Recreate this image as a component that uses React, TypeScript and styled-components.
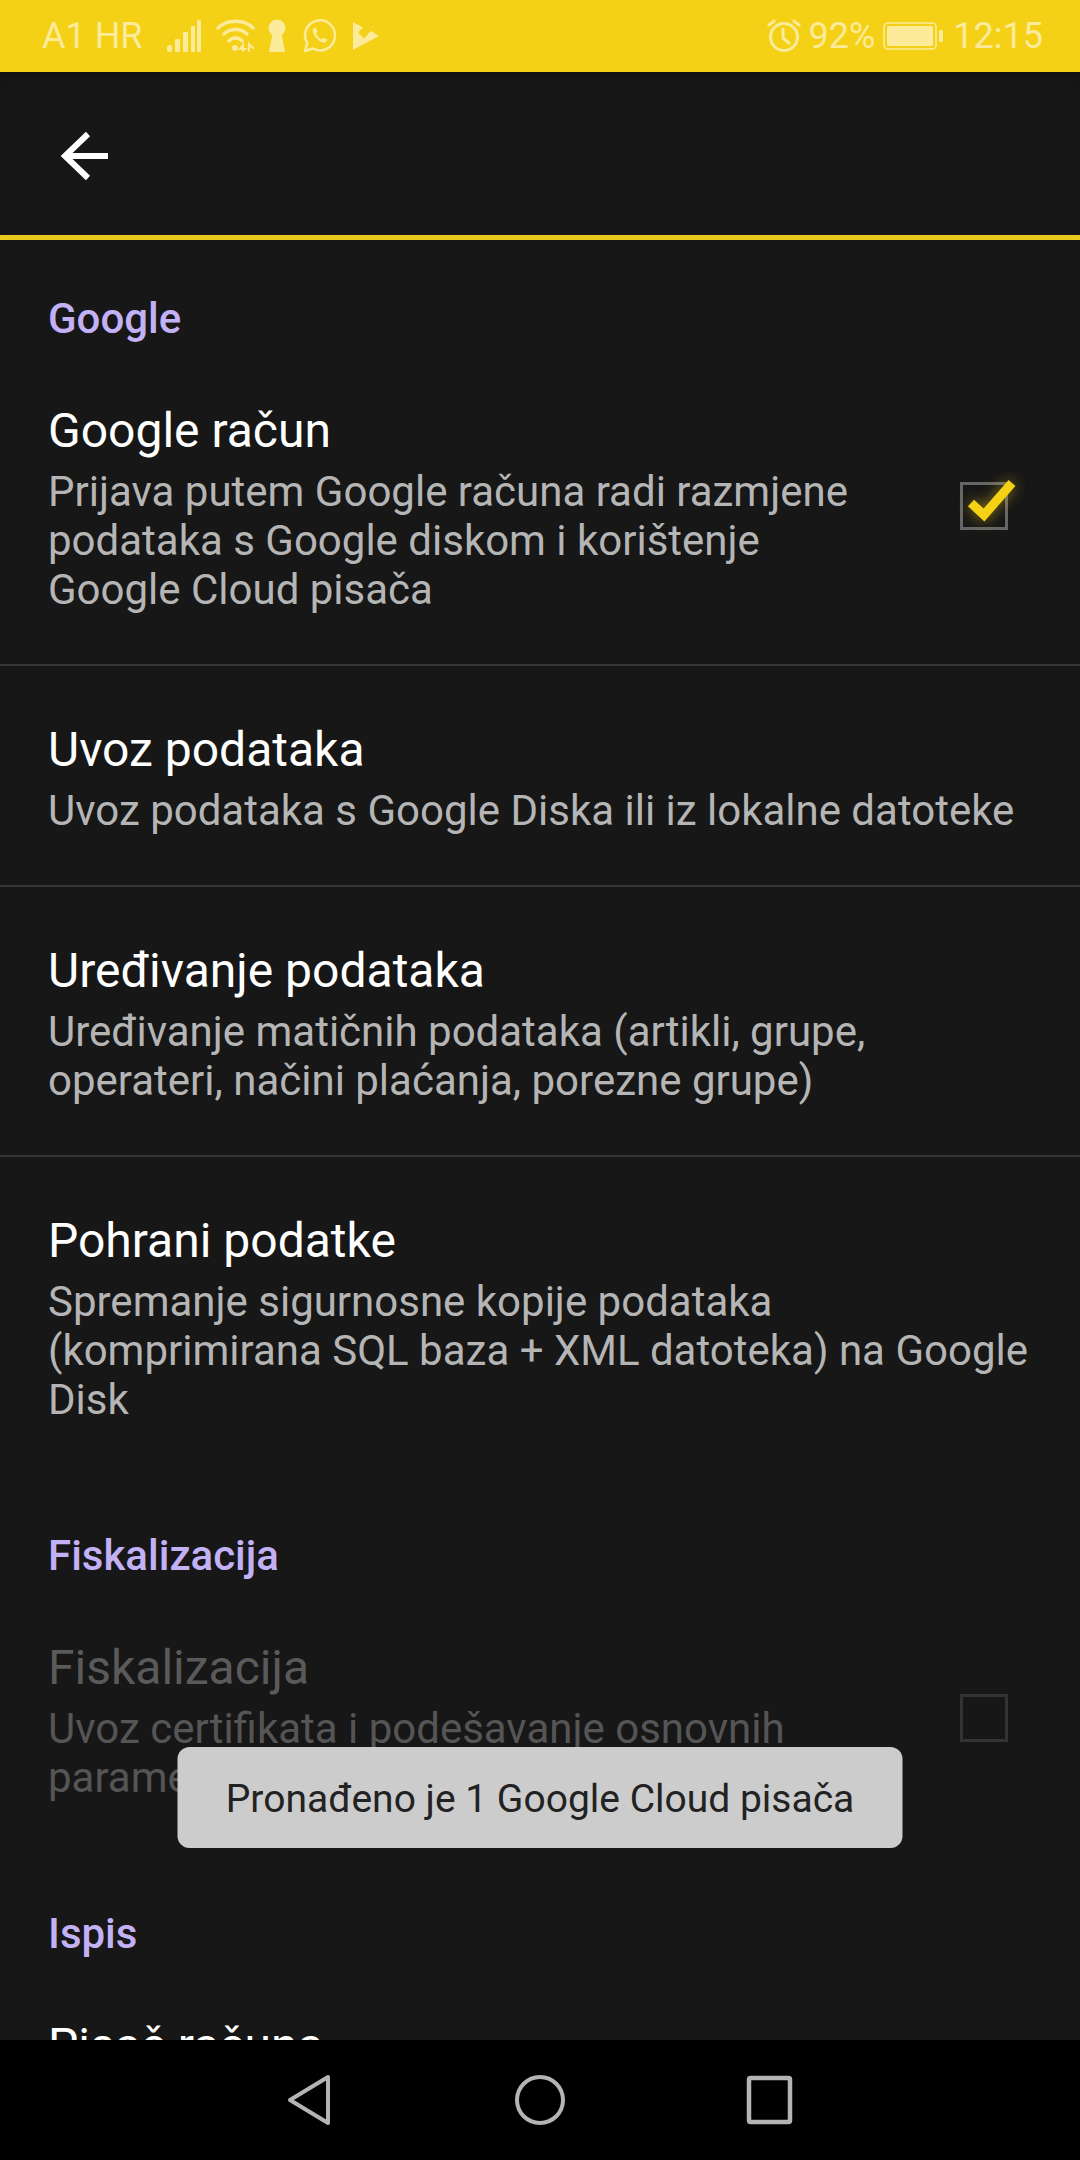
import React from 'react';
import styled, {createGlobalStyle} from 'styled-components';

const GlobalStyle = createGlobalStyle`
    html, body {
        margin: 0;
        padding: 0;
        background: #171717;
    }
    * {
        box-sizing: border-box;
    }
`

const pale = '#fbeb9a'

const SignalIcon = () => (
    <svg width="36" height="34" viewBox="0 0 36 34">
        <rect x="1" y="26" width="5" height="7" rx="2.5" fill={pale}/>
        <rect x="9" y="20" width="5" height="13" rx="1" fill={pale}/>
        <rect x="17" y="13" width="5" height="20" rx="1" fill={pale}/>
        <rect x="25" y="7" width="4" height="26" rx="1" fill={pale}/>
        <rect x="31" y="1" width="4" height="32" rx="1" fill={pale}/>
    </svg>
)

const WifiIcon = () => (
    <WifiSvg width="40" height="34" viewBox="0 0 40 34" fill="none" stroke={pale} strokeWidth="3.4" strokeLinecap="round">
        <path d="M2 9C11 0 28 0 37 9"/>
        <path d="M8 15C14 9 25 9 31 15"/>
        <path d="M13 22C16 18 23 18 26 22"/>
        <circle cx="19" cy="29" r="3" fill={pale} stroke="none"/>
        <path d="M27 32V26L24 30H30M33 32V25L37 29" strokeWidth="2"/>
    </WifiSvg>
)

const KeyholeIcon = () => (
    <svg width="18" height="34" viewBox="0 0 18 34">
        <circle cx="9" cy="9" r="8.5" fill={pale}/>
        <path d="M5 12H13L17 33H1Z" fill={pale}/>
    </svg>
)

const WhatsappIcon = () => (
    <svg width="33" height="34" viewBox="0 0 33 34" fill="none" stroke={pale}>
        <path d="M2 32L4.4 24.4A15 15 0 1 1 10 29.6Z" strokeWidth="2.6" strokeLinejoin="round"/>
        <path d="M10.5 9.5C9 11 9.5 14 12.5 18C15.5 22 19.5 24.5 22 23.5C24 22.7 24.5 21 24 20.5L20.5 18.7L18.8 20.5C16.5 19.5 14 17 13 14.5L14.5 12.8L13 9C12.5 8.5 11.2 8.8 10.5 9.5Z" fill={pale} stroke="none"/>
    </svg>
)

const PlayCheckIcon = () => (
    <svg width="26" height="28" viewBox="0 0 26 28">
        <path d="M0 0L10 5.5L6 9L11 14L20 4L18 9L26 14L0 28Z" fill={pale}/>
        <path d="M6 10L11 15L19 6" fill="none" stroke="#f4d116" strokeWidth="2"/>
    </svg>
)

const AlarmIcon = () => (
    <svg width="34" height="34" viewBox="0 0 34 34" fill="none" stroke={pale} strokeWidth="3" strokeLinecap="round">
        <circle cx="17" cy="18" r="13.5"/>
        <path d="M16 10V19L22 24"/>
        <path d="M2 6L7 2M32 6L27 2"/>
    </svg>
)

const BatteryIcon = () => (
    <svg width="62" height="28" viewBox="0 0 62 28">
        <rect x="1" y="1" width="52" height="26" rx="4" fill="none" stroke={pale} strokeWidth="1.6"/>
        <rect x="4" y="4" width="46" height="20" rx="2" fill={pale}/>
        <rect x="56" y="8" width="4" height="12" rx="1.5" fill={pale}/>
    </svg>
)

export default function App() {
    return (
        <Screen>
            <GlobalStyle/>
            <StatusBar>
                <StatusGroup>
                    <StatusText>A1 HR</StatusText>
                    <SignalSlot><SignalIcon/></SignalSlot>
                    <WifiIcon/>
                    <KeyholeIcon/>
                    <WhatsappIcon/>
                    <PlayCheckIcon/>
                </StatusGroup>
                <StatusRight>
                    <AlarmIcon/>
                    <StatusText>92%</StatusText>
                    <BatteryIcon/>
                    <StatusText>12:15</StatusText>
                </StatusRight>
            </StatusBar>

            <Toolbar>
                <svg width="48" height="52" viewBox="0 0 48 52" fill="none" stroke="#fff" strokeWidth="6">
                    <path d="M48 26H5"/>
                    <path d="M28 4L5 26L28 48"/>
                </svg>
            </Toolbar>

            <Content>
                <Category>Google</Category>
                <Row $divider>
                    <RowText>
                        <Title>Google račun</Title>
                        <Summary>Prijava putem Google računa radi razmjene podataka s Google diskom i korištenje Google Cloud pisača</Summary>
                    </RowText>
                    <CheckBox>
                        <CheckMark viewBox="0 0 60 60" fill="none">
                            <path d="M11 33L24 45L52 13" stroke="#f5d215" strokeWidth="9"/>
                        </CheckMark>
                    </CheckBox>
                </Row>
                <Row $divider>
                    <RowText>
                        <Title>Uvoz podataka</Title>
                        <Summary>Uvoz podataka s Google Diska ili iz lokalne datoteke</Summary>
                    </RowText>
                </Row>
                <Row $divider>
                    <RowText>
                        <Title>Uređivanje podataka</Title>
                        <Summary>Uređivanje matičnih podataka (artikli, grupe, operateri, načini plaćanja, porezne grupe)</Summary>
                    </RowText>
                </Row>
                <Row>
                    <RowText>
                        <Title>Pohrani podatke</Title>
                        <Summary>Spremanje sigurnosne kopije podataka (komprimirana SQL baza + XML datoteka) na Google Disk</Summary>
                    </RowText>
                </Row>

                <Category>Fiskalizacija</Category>
                <Row>
                    <RowText>
                        <Title $disabled>Fiskalizacija</Title>
                        <Summary $disabled>Uvoz certifikata i podešavanje osnovnih parametara za provedbu fiskalizacije</Summary>
                    </RowText>
                    <CheckBox $disabled/>
                </Row>

                <Category>Ispis</Category>
                <Row>
                    <RowText>
                        <Title>Pisač računa</Title>
                    </RowText>
                </Row>
            </Content>

            <Toast>Pronađeno je 1 Google Cloud pisača</Toast>

            <NavBar>
                <svg width="48" height="52" viewBox="0 0 48 52" fill="none" stroke="#b4b4b4" strokeWidth="4" strokeLinejoin="round">
                    <path d="M42 3V49L4 26Z"/>
                </svg>
                <svg width="52" height="52" viewBox="0 0 52 52" fill="none" stroke="#b4b4b4" strokeWidth="4">
                    <circle cx="26" cy="26" r="23"/>
                </svg>
                <svg width="48" height="52" viewBox="0 0 48 52" fill="none" stroke="#b4b4b4" strokeWidth="4.5" strokeLinejoin="round">
                    <rect x="3" y="4" width="41" height="44" rx="1.5"/>
                </svg>
            </NavBar>
        </Screen>
    );
}

const Screen = styled.div`
    position: relative;
    width: 1080px;
    height: 2160px;
    display: flex;
    flex-direction: column;
    overflow: hidden;
    background: #171717;
    font-family: Roboto, 'Liberation Sans', sans-serif;
`

const StatusBar = styled.div`
    flex: none;
    height: 72px;
    padding: 0 37px 0 42px;
    display: flex;
    align-items: center;
    justify-content: space-between;
    background: #f4d116;
`

const StatusGroup = styled.div`
    display: flex;
    align-items: center;
    gap: 17px;
`

const SignalSlot = styled.div`
    display: flex;
    margin-left: 6px;
`

const WifiSvg = styled.svg`
    margin: 0 -5px 0 -3px;
`

const StatusRight = styled.div`
    display: flex;
    align-items: center;
    gap: 8px;
`

const StatusText = styled.span`
    font-size: 36px;
    line-height: 40px;
    color: ${pale};
`

const Toolbar = styled.div`
    flex: none;
    height: 168px;
    padding: 4px 0 0 60px;
    display: flex;
    align-items: center;
    background: #171717;
    border-bottom: 5px solid #e9c91a;
    box-shadow: inset 0 12px 12px -8px #111;
`

const Content = styled.div`
    flex: 1;
    min-height: 0;
    overflow: hidden;
`

const Category = styled.div`
    padding: 55px 48px 4px;
    font-size: 42px;
    font-weight: 500;
    line-height: 48px;
    color: #c3b1f5;
`

const Row = styled.div<{$divider?: boolean}>`
    padding: 54px 48px ${p => p.$divider ? '50px' : '53px'};
    display: flex;
    align-items: center;
    justify-content: space-between;
    border-bottom: ${p => p.$divider ? '2px solid #363636' : 'none'};
`

const RowText = styled.div`
    flex: 1;
    min-width: 0;
`

const Title = styled.div<{$disabled?: boolean}>`
    font-size: 48px;
    line-height: 60px;
    color: ${p => p.$disabled ? '#5a5a5a' : '#fff'};
`

const Summary = styled.div<{$disabled?: boolean}>`
    margin-top: 6px;
    font-size: 42px;
    line-height: 49px;
    color: ${p => p.$disabled ? '#555' : '#b5b5b5'};
`

const CheckBox = styled.div<{$disabled?: boolean}>`
    position: relative;
    flex: none;
    width: 48px;
    height: 48px;
    margin: 0 24px 4px 72px;
    border: 3px solid ${p => p.$disabled ? '#333' : '#666'};
`

const CheckMark = styled.svg`
    position: absolute;
    left: -3px;
    top: -15px;
    width: 60px;
    height: 60px;
    overflow: visible;
    filter: drop-shadow(0 0 7px rgba(245, 210, 21, .55));
`

const Toast = styled.div`
    position: absolute;
    left: 50%;
    bottom: 312px;
    transform: translateX(-50%);
    width: 725px;
    height: 101px;
    padding-top: 2px;
    display: flex;
    align-items: center;
    justify-content: center;
    white-space: nowrap;
    border-radius: 12px;
    background: rgba(208, 208, 208, .98);
    font-size: 39px;
    color: #222;
`

const NavBar = styled.div`
    flex: none;
    height: 120px;
    display: flex;
    align-items: center;
    justify-content: center;
    gap: 180px;
    background: #000;
`
